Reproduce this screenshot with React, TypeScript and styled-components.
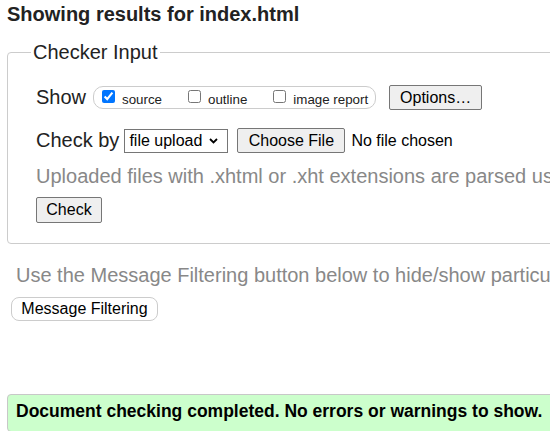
import styled, { createGlobalStyle } from 'styled-components';

const GlobalStyle = createGlobalStyle`
  html, body {
    margin: 0;
    padding: 0;
    overflow: hidden;
    background: #fff;
  }

  body {
    font-family: "Liberation Sans", Arial, sans-serif;
    color: #000;
  }
`;

const Page = styled.div`
  width: 570px;
  padding-left: 7px;
  display: flex;
  flex-direction: column;
  align-items: flex-start;
`;

const Heading = styled.h2`
  margin: 3px 0 15px;
  font-size: 20px;
  font-weight: bold;
  line-height: 23px;
  color: #222;
`;

const Fieldset = styled.fieldset`
  box-sizing: border-box;
  width: 100%;
  margin: 0;
  padding: 0 0 20px 28px;
  border: 1px solid #ccc;
  border-radius: 4px;
  display: flex;
  flex-direction: column;
  align-items: flex-start;
`;

const Legend = styled.legend`
  margin-left: -5px;
  padding: 0 2px;
  font-size: 20px;
  line-height: 23px;
  color: #222;
`;

const Row = styled.div<{ $top: number }>`
  display: flex;
  align-items: center;
  height: 25px;
  margin-top: ${p => p.$top}px;
  white-space: nowrap;
`;

const RowLabel = styled.span`
  font-size: 20px;
  line-height: 23px;
  color: #222;
  margin-right: 7px;
`;

const Pill = styled.span`
  display: inline-flex;
  align-items: center;
  height: 21px;
  padding: 0 7px 0 8px;
  border: 1px solid #ccc;
  border-radius: 10px;
`;

const Option = styled.label<{ $last?: boolean }>`
  display: inline-flex;
  align-items: center;
  font-size: 13.33px;
  line-height: 15px;
  color: #222;
  margin-right: ${p => (p.$last ? 0 : 26)}px;
  padding-top: 3px;

  input {
    width: 13px;
    height: 13px;
    margin: 0 7px 5px 0;
    accent-color: #0075ff;
  }
`;

const Button = styled.button<{ $w: number }>`
  box-sizing: border-box;
  width: ${p => p.$w}px;
  height: 25px;
  padding: 0;
  font-family: "Liberation Sans", Arial, sans-serif;
  font-size: 16px;
  color: #000;
  background: #efefef;
  border: 1px solid #767676;
  border-radius: 2px;
`;

const OptionsButton = styled(Button)`
  margin-left: 13px;
`;

const SelectWrap = styled.span`
  position: relative;
  display: inline-flex;
  margin: 0 9px 0 -2px;
`;

const Select = styled.select`
  box-sizing: border-box;
  width: 104px;
  height: 24px;
  padding: 0 0 0 4px;
  font-family: "Liberation Sans", Arial, sans-serif;
  font-size: 16px;
  color: #000;
  background: #fff;
  border: 1px solid #767676;
  border-radius: 0;
  appearance: none;
`;

const Chevron = styled.svg`
  position: absolute;
  right: 10px;
  top: 9px;
  pointer-events: none;
`;

const FileInput = styled.input`
  font-family: "Liberation Sans", Arial, sans-serif;
  font-size: 16px;
  color: #000;

  &::file-selector-button {
    box-sizing: border-box;
    width: 108px;
    height: 25px;
    margin-right: 6px;
    padding: 0;
    font-family: "Liberation Sans", Arial, sans-serif;
    font-size: 16px;
    color: #000;
    background: #efefef;
    border: 1px solid #767676;
    border-radius: 2px;
  }
`;

const Note = styled.p<{ $top: number; $left?: number }>`
  margin: ${p => p.$top}px 0 0 ${p => p.$left ?? 0}px;
  font-size: 20px;
  line-height: 23px;
  color: #888;
  white-space: nowrap;
`;

const CheckButton = styled(Button)`
  height: 26px;
  margin-top: 9px;
`;

const FilterButton = styled.button`
  box-sizing: border-box;
  width: 147px;
  height: 24px;
  margin: 10px 0 0 4px;
  padding: 0;
  font-family: "Liberation Sans", Arial, sans-serif;
  font-size: 16px;
  color: #000;
  background: #fff;
  border: 1px solid #ccc;
  border-radius: 8px;
`;

const Success = styled.div`
  box-sizing: border-box;
  width: 100%;
  margin-top: 73px;
  padding: 6px 8px 10px;
  font-size: 17.5px;
  line-height: 20px;
  font-weight: bold;
  color: #000;
  white-space: nowrap;
  background: #ccffcc;
  border: 1px solid #c8c8c8;
  border-radius: 4px;
`;

export default function App() {
  return (
    <>
      <GlobalStyle />
      <Page>
        <Heading>Showing results for index.html</Heading>
        <Fieldset>
          <Legend>Checker Input</Legend>
          <Row $top={21}>
            <RowLabel>Show</RowLabel>
            <Pill>
              <Option>
                <input type="checkbox" defaultChecked />
                source
              </Option>
              <Option>
                <input type="checkbox" />
                outline
              </Option>
              <Option $last>
                <input type="checkbox" />
                image report
              </Option>
            </Pill>
            <OptionsButton $w={93}>Options…</OptionsButton>
          </Row>
          <Row $top={18}>
            <RowLabel>Check by</RowLabel>
            <SelectWrap>
              <Select defaultValue="upload">
                <option value="upload">file upload</option>
                <option value="uri">address</option>
                <option value="direct">text input</option>
              </Select>
              <Chevron width="9" height="6" viewBox="0 0 9 6">
                <path d="M1 1l3.5 3.5L8 1" fill="none" stroke="#000" strokeWidth="1.8" />
              </Chevron>
            </SelectWrap>
            <FileInput type="file" />
          </Row>
          <Note $top={12}>Uploaded files with .xhtml or .xht extensions are parsed using the XML parser.</Note>
          <CheckButton $w={66}>Check</CheckButton>
        </Fieldset>
        <Note $top={20} $left={9}>Use the Message Filtering button below to hide/show particular messages, and to see total counts of errors and warnings.</Note>
        <FilterButton>Message Filtering</FilterButton>
        <Success>Document checking completed. No errors or warnings to show.</Success>
      </Page>
    </>
  );
}
